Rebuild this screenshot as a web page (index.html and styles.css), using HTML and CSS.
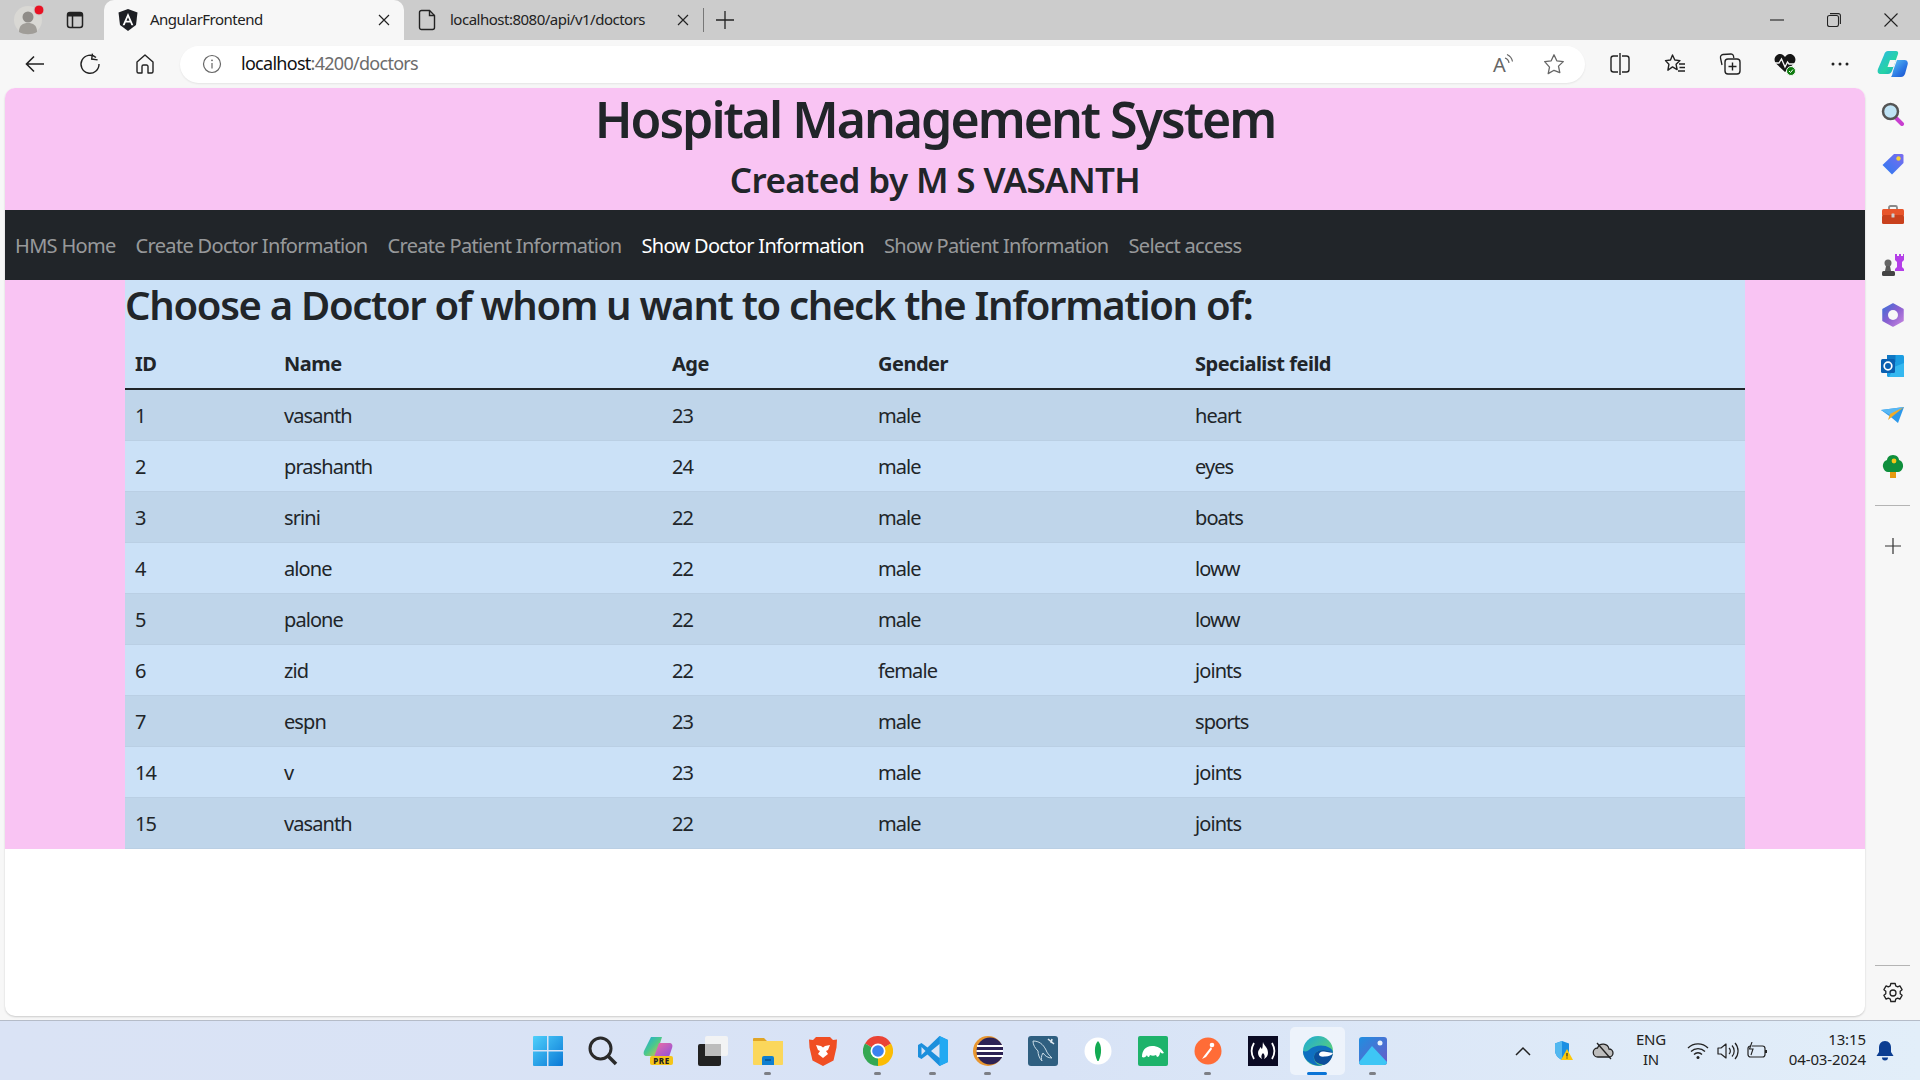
FILE: index.html
```html
<!DOCTYPE html>
<html lang="en">
<head>
<meta charset="utf-8">
<title>AngularFrontend</title>
<link rel="stylesheet" href="styles.css">
</head>
<body>
<div class="app">
  <div class="tabstrip">
    <div class="tab-side">
      <span class="profile"><svg width="32" height="32" viewBox="0 0 32 32"><circle cx="14" cy="16" r="14" fill="#d9d8d4"/><circle cx="14" cy="13" r="5.5" fill="#8f8c88"/><path d="M5 28c0-7 4-9 9-9s9 2 9 9c-5 3-13 3-18 0z" fill="#a09d98"/><circle cx="25" cy="6" r="5" fill="#e81123" stroke="#ccc" stroke-width="1"/></svg></span>
      <span class="tab-actions"><svg width="20" height="20" viewBox="0 0 20 20"><rect x="2.5" y="2.5" width="15" height="15" rx="2.5" fill="none" stroke="#222" stroke-width="1.5"/><path d="M3 3h14v3.5H3z" fill="#222"/><path d="M7.5 6v11" stroke="#222" stroke-width="1.5"/></svg></span>
    </div>
    <div class="tab tab-active">
      <svg width="20" height="22" viewBox="0 0 20 22"><path d="M10 0l9.5 3.4-1.5 12.6L10 22l-8-6L.5 3.4z" fill="#1d1f24"/><path d="M10 4L4.6 16.2h2l1.1-2.7h4.6l1.1 2.7h2zM8.5 11.8L10 8.2l1.5 3.6z" fill="#fff"/></svg>
      <span class="tab-title">AngularFrontend</span>
      <svg class="tab-close" width="12" height="12" viewBox="0 0 12 12"><path d="M1 1l10 10M11 1L1 11" stroke="#222" stroke-width="1.2"/></svg>
    </div>
    <div class="tab tab-second">
      <svg width="20" height="22" viewBox="0 0 20 22"><path d="M3.5 1.5h8l5 5v12a2 2 0 0 1-2 2h-11a2 2 0 0 1-2-2v-15a2 2 0 0 1 2-2z" fill="none" stroke="#222" stroke-width="1.4"/><path d="M11.5 1.5v5h5" fill="none" stroke="#222" stroke-width="1.4"/></svg>
      <span class="tab-title">localhost:8080/api/v1/doctors</span>
      <svg class="tab-close" width="12" height="12" viewBox="0 0 12 12"><path d="M1 1l10 10M11 1L1 11" stroke="#222" stroke-width="1.2"/></svg>
    </div>
    <span class="tab-sep"></span>
    <span class="new-tab"><svg width="18" height="18" viewBox="0 0 18 18"><path d="M9 0v18M0 9h18" stroke="#222" stroke-width="1.3"/></svg></span>
    <div class="win-controls">
      <span class="win-btn"><svg width="14" height="14" viewBox="0 0 14 14"><path d="M0 7h14" stroke="#222" stroke-width="1.1"/></svg></span>
      <span class="win-btn"><svg width="14" height="14" viewBox="0 0 14 14"><rect x=".5" y="2.5" width="11" height="11" rx="2" fill="none" stroke="#222" stroke-width="1.1"/><path d="M3 .6h8.4a2 2 0 0 1 2 2V11" fill="none" stroke="#222" stroke-width="1.1"/></svg></span>
      <span class="win-btn"><svg width="14" height="14" viewBox="0 0 14 14"><path d="M.5.5l13 13M13.5.5l-13 13" stroke="#222" stroke-width="1.1"/></svg></span>
    </div>
  </div>

  <div class="toolbar">
    <span class="tool"><svg width="22" height="22" viewBox="0 0 22 22"><path d="M20 11H3M10 3.5L2.5 11l7.5 7.5" fill="none" stroke="#222" stroke-width="1.6"/></svg></span>
    <span class="tool"><svg width="22" height="22" viewBox="0 0 22 22"><path d="M17 4.5A9 9 0 1 0 20 11" fill="none" stroke="#222" stroke-width="1.4"/><path d="M13 1v5.5h6" fill="none" stroke="#222" stroke-width="1.4" transform="rotate(8 16 4)"/></svg></span>
    <span class="tool"><svg width="22" height="22" viewBox="0 0 22 22"><path d="M11 2l8 7v9.5a1.5 1.5 0 0 1-1.5 1.5H14v-6.500a1.500 1.500 0 0 0-1.500-1.500h-3A1.500 1.500 0 0 0 8 13.500V20H4.500A1.500 1.500 0 0 1 3 18.500V9z" fill="none" stroke="#222" stroke-width="1.4" stroke-linejoin="round"/></svg></span>
    <div class="address">
      <svg width="20" height="20" viewBox="0 0 20 20"><circle cx="10" cy="10" r="8.500" fill="none" stroke="#666" stroke-width="1.200"/><path d="M10 9v5.500" stroke="#666" stroke-width="1.200"/><circle cx="10" cy="6.300" r=".9" fill="#666"/></svg>
      <span class="url"><span class="url-host">localhost</span>:4200/doctors</span>
      <span class="addr-end">
        <svg width="24" height="32" viewBox="0 0 24 32"><text x="1" y="24" class="read-a">A</text><path d="M13 10a6 6 0 0 1 4 5M15 6.500a9.500 9.500 0 0 1 5.500 7" fill="none" stroke="#666" stroke-width="1.200"/></svg>
        <svg width="22" height="22" viewBox="0 0 22 22"><path d="M11 1.800l2.800 6 6.500.8-4.800 4.500 1.300 6.500L11 17.300l-5.800 3.300 1.300-6.500L1.700 8.600l6.500-.8z" fill="none" stroke="#666" stroke-width="1.300" stroke-linejoin="round"/></svg>
      </span>
    </div>
    <div class="tool-right">
      <span class="tool"><svg width="22" height="22" viewBox="0 0 22 22"><path d="M9 3H4.500A2.500 2.500 0 0 0 2 5.500v11A2.500 2.500 0 0 0 4.500 19H9M13 3h4.500A2.500 2.500 0 0 1 20 5.500v11a2.500 2.500 0 0 1-2.500 2.500H13M11 0v22" fill="none" stroke="#222" stroke-width="1.400"/></svg></span>
      <span class="tool"><svg width="22" height="22" viewBox="0 0 22 22"><path d="M8.500 2l2.300 5 5.200.6-3.900 3.700 1 5.300-4.600-2.700-4.600 3.300 1-5.900L1.500 7.600l5-.6z" fill="none" stroke="#222" stroke-width="1.400" stroke-linejoin="round"/><path d="M15 11h6M15.500 14.500h5.500M14 18h7" stroke="#222" stroke-width="1.300"/></svg></span>
      <span class="tool"><svg width="22" height="22" viewBox="0 0 22 22"><path d="M3 12L1.500 5A3 3 0 0 1 4 1.500l8-.5a2.500 2.500 0 0 1 2.500 2l.3 2" fill="none" stroke="#222" stroke-width="1.300"/><rect x="6" y="6" width="15" height="15" rx="3" fill="#f7f7f7" stroke="#222" stroke-width="1.400"/><path d="M13.500 9.500v8M9.500 13.500h8" stroke="#222" stroke-width="1.400"/></svg></span>
      <span class="tool"><svg width="24" height="24" viewBox="0 0 24 24"><path d="M12 20L3 11.500C-.500 7 3 2 7 2c2.500 0 4 1.500 5 3 1-1.500 2.500-3 5-3 4 0 7.500 5 4 9.500z" fill="#161616"/><path d="M0 11h6l2.500-4 3.500 8 2.500-5 1.500 2h8" fill="none" stroke="#f7f7f7" stroke-width="1.300"/><circle cx="18" cy="19" r="4.500" fill="#107c10" stroke="#f7f7f7"/><path d="M16 19l1.500 1.500 2.500-3" fill="none" stroke="#fff" stroke-width="1"/></svg></span>
      <span class="tool"><svg width="20" height="6" viewBox="0 0 20 6"><circle cx="3" cy="3" r="1.500" fill="#222"/><circle cx="10" cy="3" r="1.500" fill="#222"/><circle cx="17" cy="3" r="1.500" fill="#222"/></svg></span>
      <span class="tool tool-last"><svg width="31" height="28" viewBox="0 0 31 28"><defs><linearGradient id="cpa" x1="0" y1="0" x2="1" y2="1"><stop offset="0" stop-color="#2fb6e8"/><stop offset=".6" stop-color="#25d3a5"/><stop offset="1" stop-color="#15a0c8"/></linearGradient><linearGradient id="cpb" x1="0" y1="0" x2="1" y2="1"><stop offset="0" stop-color="#5cc8f5"/><stop offset=".6" stop-color="#2c78e4"/><stop offset="1" stop-color="#1b4fc8"/></linearGradient></defs><path d="M11 1h8c2 0 2.500 1.500 2 3l-6 17c-1 2-2 3-4 3H4c-3 0-4-2-3-5L7 5c1-3 2-4 4-4z" fill="url(#cpa)"/><path d="M14 27h10c2 0 3-1 4-3l2.500-9c1-3-.5-5-3-5H20l-4 11c-.5 3-1 5-2 6z" fill="url(#cpb)"/><path d="M13 10h6l-2.500 7h-6z" fill="#f7f7f7"/></svg></span>
    </div>
  </div>

  <div class="middle">
    <main class="page">
      <header class="site-head">
        <h1 class="site-title">Hospital Management System</h1>
        <h3 class="site-sub">Created by M S VASANTH</h3>
      </header>
      <nav class="navbar">
        <a class="nav-link">HMS Home</a>
        <a class="nav-link">Create Doctor Information</a>
        <a class="nav-link">Create Patient Information</a>
        <a class="nav-link is-active">Show Doctor Information</a>
        <a class="nav-link">Show Patient Information</a>
        <a class="nav-link">Select access</a>
      </nav>
      <section class="content">
        <div class="container">
          <h2 class="choose">Choose a Doctor of whom u want to check the Information of:</h2>
          <table class="doctors">
            <colgroup><col class="c-id"><col class="c-name"><col class="c-age"><col class="c-gender"><col class="c-spec"></colgroup>
            <thead><tr><th>ID</th><th>Name</th><th>Age</th><th>Gender</th><th>Specialist feild</th></tr></thead>
            <tbody>
              <tr><td>1</td><td>vasanth</td><td>23</td><td>male</td><td>heart</td></tr>
              <tr><td>2</td><td>prashanth</td><td>24</td><td>male</td><td>eyes</td></tr>
              <tr><td>3</td><td>srini</td><td>22</td><td>male</td><td>boats</td></tr>
              <tr><td>4</td><td>alone</td><td>22</td><td>male</td><td>loww</td></tr>
              <tr><td>5</td><td>palone</td><td>22</td><td>male</td><td>loww</td></tr>
              <tr><td>6</td><td>zid</td><td>22</td><td>female</td><td>joints</td></tr>
              <tr><td>7</td><td>espn</td><td>23</td><td>male</td><td>sports</td></tr>
              <tr><td>14</td><td>v</td><td>23</td><td>male</td><td>joints</td></tr>
              <tr><td>15</td><td>vasanth</td><td>22</td><td>male</td><td>joints</td></tr>
            </tbody>
          </table>
        </div>
      </section>
    </main>
    <aside class="sidebar">
      <span class="side-item"><svg width="24" height="24" viewBox="0 0 24 24"><path d="M14 15l7 7" stroke="#c83fd0" stroke-width="4" stroke-linecap="round"/><circle cx="9.500" cy="9.500" r="7.500" fill="#bfe3f5" stroke="#555" stroke-width="2.500"/></svg></span>
      <span class="side-item"><svg width="24" height="24" viewBox="0 0 24 24"><defs><linearGradient id="tag" x1="0" y1="1" x2="1" y2="0"><stop offset="0" stop-color="#2a7bf0"/><stop offset="1" stop-color="#7b6cf0"/></linearGradient></defs><path d="M13 2h8a1.500 1.500 0 0 1 1.500 1.500V11L11 22.500 1.500 13z" fill="url(#tag)"/><circle cx="17.500" cy="6.500" r="2.200" fill="#f7d038"/></svg></span>
      <span class="side-item"><svg width="24" height="24" viewBox="0 0 24 24"><path d="M8 7V4.500A1.500 1.500 0 0 1 9.500 3h5A1.500 1.500 0 0 1 16 4.500V7" fill="none" stroke="#888" stroke-width="1.800"/><rect x="1" y="6" width="22" height="7" rx="1.500" fill="#e8552b"/><rect x="1" y="12" width="22" height="9" rx="1.500" fill="#c9411d"/><rect x="10.500" y="10.500" width="3" height="4" rx=".6" fill="#cfcfcf"/></svg></span>
      <span class="side-item"><svg width="24" height="24" viewBox="0 0 24 24"><path d="M14 1h2v2h2V1h2v2h2V1h1v6l-2 2v5l2 2v2H14v-2l2-2V9l-2-2z" fill="#b43fe8"/><circle cx="7" cy="10" r="3.500" fill="#666"/><path d="M5 13h4l1 5H4z" fill="#5a5a5a"/><rect x="1" y="18" width="13" height="5" rx="1.500" fill="#444"/></svg></span>
      <span class="side-item"><svg width="24" height="24" viewBox="0 0 24 24"><defs><linearGradient id="m365" x1="0" y1="0" x2="1" y2="1"><stop offset="0" stop-color="#3b6fd8"/><stop offset=".5" stop-color="#8a5fd0"/><stop offset="1" stop-color="#c887e0"/></linearGradient></defs><path d="M12 1l10 5.500v11L12 23 2 17.500v-11z" fill="url(#m365)" stroke="url(#m365)" stroke-width="1.500" stroke-linejoin="round"/><circle cx="12" cy="12" r="5" fill="#f7f7f7"/></svg></span>
      <span class="side-item"><svg width="24" height="24" viewBox="0 0 24 24"><rect x="6" y="1" width="17" height="22" rx="1.500" fill="#1b9de2"/><path d="M6 1h8.500v7H6z" fill="#0f78c4"/><path d="M13 13l10-4v14H8z" fill="#35b8f0"/><rect x="0" y="5" width="14" height="14" rx="1.500" fill="#0a5fb0"/><circle cx="7" cy="12" r="3.800" fill="none" stroke="#fff" stroke-width="1.700"/></svg></span>
      <span class="side-item"><svg width="24" height="24" viewBox="0 0 24 24"><path d="M0 6l23-3-6 16-6-5z" fill="#2c98ea"/><path d="M0 6l23-3L9 11z" fill="#58b7f3"/><path d="M23 3L9 10l-2 6z" fill="#f0ab28"/></svg></span>
      <span class="side-item"><svg width="24" height="24" viewBox="0 0 24 24"><rect x="9" y="16" width="6" height="8" fill="#e79a10"/><path d="M12 1c4 0 6 3 6 5 3 1 4.500 4 4 7-.5 3-3 5-5 5H7c-2 0-4.500-2-5-5-.5-3 1-6 4-7 0-2 2-5 6-5z" fill="#0f8f3c"/><circle cx="13" cy="7" r="2.400" fill="#f5c518"/></svg></span>
      <span class="side-rule"></span>
      <span class="side-item"><svg width="16" height="16" viewBox="0 0 16 16"><path d="M8 0v16M0 8h16" stroke="#333" stroke-width="1.200"/></svg></span>
      <span class="side-spacer"></span>
      <span class="side-rule side-rule-end"></span>
      <span class="side-item"><svg width="22" height="22" viewBox="0 0 22 22"><path d="M8.800 1.500h4.400l.5 2.400 2 1 2.200-1 2.200 3.800-1.900 1.600v2.400l1.900 1.600-2.200 3.800-2.200-1-2 1-.5 2.400H8.800l-.5-2.400-2-1-2.200 1-2.200-3.800 1.900-1.600V9.300L1.900 7.700l2.200-3.800 2.200 1 2-1z" fill="none" stroke="#222" stroke-width="1.300" stroke-linejoin="round"/><circle cx="11" cy="11" r="3" fill="none" stroke="#222" stroke-width="1.300"/></svg></span>
    </aside>
  </div>

  <footer class="taskbar">
    <div class="tb-left"></div>
    <div class="tb-apps">
      <span class="app-icon"><svg width="30" height="30" viewBox="0 0 30 30"><defs><linearGradient id="win" x1="0" y1="0" x2="1" y2="1"><stop offset="0" stop-color="#4fd0fb"/><stop offset="1" stop-color="#0a78d6"/></linearGradient></defs><path d="M1 0h13v14H0V1a1 1 0 0 1 1-1zM15.500 0H29a1 1 0 0 1 1 1v13H15.500zM0 15.500h14V30H1a1 1 0 0 1-1-1zM15.500 15.500H30V29a1 1 0 0 1-1 1H15.500z" fill="url(#win)"/></svg></span>
      <span class="app-icon"><svg width="30" height="30" viewBox="0 0 30 30"><circle cx="12.500" cy="12.500" r="10.500" fill="none" stroke="#2a2a2a" stroke-width="3"/><path d="M20 20l8 8" stroke="#2a2a2a" stroke-width="3.500"/></svg></span>
      <span class="app-icon"><svg class="svg-tall" width="30" height="36" viewBox="0 -3 30 36"><defs><linearGradient id="cp1" x1="0" y1="0" x2="1" y2="1"><stop offset="0" stop-color="#1ba8e0"/><stop offset=".5" stop-color="#4cc98a"/><stop offset="1" stop-color="#e8c43a"/></linearGradient><linearGradient id="cp2" x1="0" y1="0" x2="1" y2="1"><stop offset="0" stop-color="#f06fa0"/><stop offset="1" stop-color="#8a4fe0"/></linearGradient></defs><path d="M8 1h11l-6 19H4c-3 0-4-2-3-5z" fill="url(#cp1)"/><path d="M16 7h10c3 0 4 2 3 5l-3 9H11z" fill="url(#cp2)"/><rect x="7" y="20" width="23" height="9" rx="2" fill="#f5c518"/><text x="18.500" y="27.500" class="pre">PRE</text></svg></span>
      <span class="app-icon"><svg width="30" height="30" viewBox="0 0 30 30"><rect x="0" y="8" width="23" height="22" rx="2" fill="#222"/><rect x="7" y="0" width="23" height="20" rx="2" fill="#f3f3f3" opacity=".95"/><rect x="7" y="8" width="16" height="12" fill="#bdbdbd"/></svg></span>
      <span class="app-icon has-dot"><svg width="30" height="30" viewBox="0 0 30 30"><path d="M0 3a1 1 0 0 1 1-1h10l3 3h16v4H0z" fill="#e0a526"/><path d="M0 5h30v23a1 1 0 0 1-1 1H1a1 1 0 0 1-1-1z" fill="#fbd75b"/><path d="M9 22a2 2 0 0 1 2-2h8a2 2 0 0 1 2 2v7H9z" fill="#0f7fd0"/><path d="M12 24h6" stroke="#084e88" stroke-width="1.400"/></svg></span>
      <span class="app-icon"><svg width="30" height="30" viewBox="0 0 30 30"><path d="M8 1h14l3 3 4-.500-.5 8-3 13L15 30 4.500 24.500l-3-13-.5-8 4 .5z" fill="#f04e23"/><path d="M8 9l5 1 2 1.500 2-1.500 5-1-2 5-2 1 2 3-5 4-5-4 2-3-2-1z" fill="#fff"/></svg></span>
      <span class="app-icon has-dot"><svg width="30" height="30" viewBox="0 0 30 30"><path d="M15 15L2 7.500A15 15 0 0 1 28 7.500z" fill="#ea4335"/><path d="M15 15l-13-7.500A15 15 0 0 0 15 30z" fill="#34a853"/><path d="M15 15l13-7.500A15 15 0 0 1 15 30z" fill="#fbbc05"/><circle cx="15" cy="15" r="7.500" fill="#fff"/><circle cx="15" cy="15" r="5.800" fill="#3b82f0"/></svg></span>
      <span class="app-icon has-dot"><svg width="30" height="30" viewBox="0 0 30 30"><path d="M21.500 0L30 4v22l-8.500 4L9.500 18.500 3.500 23 0 21V9l3.500-2 6 4.500z" fill="#1c8fdc"/><path d="M21.500 0L30 4v22l-8.500 4z" fill="#23a9f2"/><path d="M21.500 8L13 15l8.500 7zM3.500 11v8l4-4z" fill="#dbe5f6"/></svg></span>
      <span class="app-icon has-dot"><svg width="30" height="30" viewBox="0 0 30 30"><circle cx="15" cy="15" r="15" fill="#e8962f"/><circle cx="17" cy="15" r="13.500" fill="#2c2255"/><path d="M4 10h26M3.500 15h27M4 20h26" stroke="#fff" stroke-width="2.200"/></svg></span>
      <span class="app-icon"><svg width="30" height="30" viewBox="0 0 30 30"><rect width="30" height="30" rx="3" fill="#2f5f80"/><path d="M5 5c6 0 10 3 13 9 1 3 3 5 6 8-4 0-7-2-9-5-2 3-2 6-1 8-3-3-4-7-4-10-3-3-5-6-5-10z" fill="none" stroke="#c9dbe6" stroke-width="1"/><path d="M20 3l6 5M24 3l-1 4" stroke="#dfe9f0" stroke-width="1.600"/></svg></span>
      <span class="app-icon"><svg width="30" height="30" viewBox="0 0 30 30"><circle cx="15" cy="15" r="13.500" fill="#fff"/><path d="M15 5c4 4 4 13 .6 20h-1.200C11 18 11 9 15 5z" fill="#13aa52"/></svg></span>
      <span class="app-icon"><svg width="30" height="30" viewBox="0 0 30 30"><rect width="30" height="30" rx="2" fill="#1eb36b"/><path d="M4 21c0-6 3-11 10-11 6 0 9 2 12 7-2 1-3 0-4-1 0 2-1 5-3 5l-1-2c-2 1-4 1-6 0l-1 2c-2 0-2-2-2-2-1 2-3 3-5 2z" fill="#fff"/></svg></span>
      <span class="app-icon has-dot"><svg width="30" height="30" viewBox="0 0 30 30"><circle cx="15" cy="15" r="13.500" fill="#ff6c37"/><circle cx="19" cy="9" r="2.300" fill="#fff"/><path d="M18 11l-7 9-2 3 4-2 6-8z" fill="#fff"/></svg></span>
      <span class="app-icon"><svg width="30" height="30" viewBox="0 0 30 30"><rect width="30" height="30" fill="#0a0a23"/><path d="M6 7c-3 5-3 11 0 16M24 7c3 5 3 11 0 16" fill="none" stroke="#fff" stroke-width="1.800"/><path d="M15 6c1 4 5 5 5 11 0 3-2 5-4 6 1-2 1-4-1-6-2 2-2 4-1 6-2-1-4-3-4-6 0-3 2-4 2.500-6 1 1 1 2 1.500 2 1-2 .5-5 1-7z" fill="#fff"/></svg></span>
      <span class="app-icon is-current"><svg width="30" height="30" viewBox="0 0 30 30"><defs><linearGradient id="edg" x1="0" y1="0" x2="1" y2="1"><stop offset="0" stop-color="#1ba9d8"/><stop offset="1" stop-color="#6fdc5c"/></linearGradient></defs><circle cx="15" cy="15" r="15" fill="url(#edg)"/><path d="M30 17c-2-2-6-3-10-3-6 0-10 4-9 9 1 4 5 7 10 6-4 1-8 1-12-1C3 25 0 20 0 15c3 1 5 0 7-2 5-4 14-5 20-1 2 1 3 3 3 5z" fill="#0f6fc0"/><path d="M11 21c0-4 4-7 9-7 4 0 8 1 10 3-1 6-4 10-9 12-6-1-10-3-10-8z" fill="#0c4f9c"/><path d="M16 18.500c0-2 2-3.500 5-3 3 .5 6 1 9 1.500-1 2-4 3.500-8 3.500-4 .5-6-.5-6-2z" fill="#fff"/></svg><span class="current-bar"></span></span>
      <span class="app-icon has-dot"><svg width="28" height="28" viewBox="0 0 28 28"><defs><linearGradient id="ph" x1="0" y1="0" x2="1" y2="1"><stop offset="0" stop-color="#1f8fe0"/><stop offset="1" stop-color="#6c5ac8"/></linearGradient></defs><rect width="28" height="28" rx="3" fill="url(#ph)"/><circle cx="21" cy="6" r="2.500" fill="#e9f2fb"/><path d="M0 25L13 9l15 16v0a3 3 0 0 1-3 3H3a3 3 0 0 1-3-3z" fill="#3ec6f5"/></svg></span>
    </div>
    <div class="tray">
      <span class="tray-item"><svg width="16" height="10" viewBox="0 0 16 10"><path d="M1 9l7-7 7 7" fill="none" stroke="#222" stroke-width="1.500"/></svg></span>
      <span class="tray-item"><svg width="20" height="20" viewBox="0 0 20 20"><path d="M9 0l7 2.500V9c0 5-3 8-7 10-4-2-7-5-7-10V2.500z" fill="#1a8fe3"/><path d="M9 0v19C5 17 2 14 2 9V2.500z" fill="#52b8f0"/><path d="M14 8l6 11H8z" fill="#fdc90a"/><path d="M14 12v3.500M14 16.500v1" stroke="#222" stroke-width="1.100"/></svg></span>
      <span class="tray-item"><svg width="22" height="20" viewBox="0 0 22 20"><path d="M6 16a4.500 4.500 0 0 1-.5-9A6 6 0 0 1 17 8a4 4 0 0 1 0 8z" fill="#bdbdbd" stroke="#222" stroke-width="1.300"/><path d="M5 2l14 16" stroke="#222" stroke-width="1.300"/></svg></span>
      <span class="tray-lang"><span>ENG</span><span>IN</span></span>
      <span class="tray-sys"><svg width="22" height="18" viewBox="0 0 22 18"><path d="M1 6a14 14 0 0 1 20 0M4 9.500a10 10 0 0 1 14 0M7 12.500a5.500 5.500 0 0 1 8 0" fill="none" stroke="#222" stroke-width="1.300"/><circle cx="11" cy="15.500" r="1.500" fill="#222"/></svg></span>
      <span class="tray-sys"><svg width="22" height="18" viewBox="0 0 22 18"><path d="M1 6h3l5-4v14l-5-4H1z" fill="none" stroke="#222" stroke-width="1.200" stroke-linejoin="round"/><path d="M12 6a4 4 0 0 1 0 6M15 3.500a8 8 0 0 1 0 11M18 1a12 12 0 0 1 0 16" fill="none" stroke="#222" stroke-width="1.200"/></svg></span>
      <span class="tray-sys"><svg width="22" height="18" viewBox="0 0 22 18"><rect x="1" y="4" width="17" height="11" rx="2.500" fill="none" stroke="#222" stroke-width="1.200"/><path d="M19 8v3" stroke="#222" stroke-width="2"/><path d="M5 0L2.500 7H6l-2 6" fill="#e0ecf8" stroke="#222" stroke-width="1.100"/></svg></span>
      <span class="clock"><span>13:15</span><span>04-03-2024</span></span>
      <span class="bell"><svg width="18" height="20" viewBox="0 0 18 20"><path d="M9 0c4 0 6 3 6 6.500V11l2.500 4H.5L3 11V6.500C3 3 5 0 9 0z" fill="#0b3d91"/><path d="M6 16.500h6a3 3 0 0 1-6 0z" fill="#0b3d91"/></svg></span>
    </div>
  </footer>
</div>
</body>
</html>
```
FILE: styles.css
```css
* { box-sizing: border-box; }
html, body { margin: 0; padding: 0; }
body { font-family: "Noto Sans", "Open Sans", sans-serif; color: #212529; background: #f7f7f7; overflow: hidden; }
svg { display: block; flex: none; }
.app { display: flex; flex-direction: column; width: 1920px; height: 1080px; }

/* tab strip */
.tabstrip { display: flex; align-items: stretch; height: 40px; background: #cccccc; }
.tab-side { display: flex; align-items: center; width: 104px; padding-left: 14px; }
.profile { width: 32px; margin-right: 19px; }
.tab { display: flex; align-items: center; width: 300px; padding: 0 14px; gap: 12px; font-size: 15px; letter-spacing: -0.5px; color: #222; }
.tab-second { width: 299px; }
.tab-active { background: #f7f7f7; border-radius: 10px 10px 0 0; }
.tab-title { flex: 1; white-space: nowrap; padding-bottom: 2px; }
.tab-sep { width: 1px; height: 24px; align-self: center; background: #777; }
.new-tab { display: flex; align-items: center; margin-left: 12px; }
.win-controls { display: flex; align-items: center; margin-left: auto; padding-right: 1px; }
.win-btn { width: 57px; display: flex; justify-content: center; }

/* toolbar */
.toolbar { display: flex; align-items: center; height: 48px; background: #f7f7f7; padding-left: 7px; }
.tool { width: 55px; height: 36px; display: flex; align-items: center; justify-content: center; flex: none; }
.tool-last { width: 50px; }
.address { display: flex; align-items: center; flex: none; width: 1405px; height: 37px; margin-left: 8px; margin-right: 7px; padding: 0 20px 0 22px; background: #fff; border-radius: 19px; box-shadow: 0 1px 2px rgba(0,0,0,.08); }
.url { margin-left: 19px; padding-bottom: 2px; font-size: 18px; letter-spacing: -0.72px; color: #6c6c6c; white-space: nowrap; }
.url-host { color: #111; }
.addr-end { display: flex; align-items: center; gap: 27px; margin-left: auto; height: 32px; }
.read-a { font: 20px "Noto Sans", sans-serif; fill: #666; }
.tool-right { display: flex; }

/* middle */
.middle { display: flex; height: 932px; }
.page { width: 1860px; height: 928px; margin-left: 5px; background: #fff; border-radius: 10px; box-shadow: 0 1px 2px rgba(0,0,0,.18); }
.site-head { background: #f9c4f3; text-align: center; height: 122px; padding-top: 1px; border-radius: 10px 10px 0 0; }
.site-title { margin: 0 0 10px; font-size: 50px; font-weight: 600; line-height: 60px; letter-spacing: -2px; white-space: nowrap; }
.site-sub { margin: 0; font-size: 35px; font-weight: 600; line-height: 42px; letter-spacing: -0.62px; white-space: nowrap; }
.navbar { display: flex; align-items: center; height: 70px; padding-top: 1px; background: #212529; font-size: 20px; }
.nav-link { padding: 0 10px; color: rgba(255,255,255,.55); letter-spacing: -0.68px; white-space: nowrap; }
.is-active { color: #fff; }
.content { background: #f9c4f3; }
.container { width: 1620px; margin: 0 auto; background: #cbe1f7; }
.choose { margin: 0; padding-top: 1px; height: 58px; font-size: 40px; font-weight: 600; line-height: 48px; letter-spacing: -1.31px; white-space: nowrap; }
.doctors { width: 100%; border-collapse: collapse; table-layout: fixed; font-size: 20px; }
.c-id { width: 149px; } .c-name { width: 388px; } .c-age { width: 206px; } .c-gender { width: 317px; }
.doctors th, .doctors td { height: 51px; padding: 0 10px; text-align: left; }
.doctors th { font-weight: 700; letter-spacing: -0.5px; border-bottom: 2px solid #212529; }
.doctors td { padding-top: 2px; border-bottom: 1px solid #bacfe4; font-weight: 400; letter-spacing: -0.92px; }
.doctors tbody tr:nth-child(odd) td { background: #bfd5ea; }

/* sidebar */
.sidebar { flex: 1; display: flex; flex-direction: column; align-items: center; padding: 1px 0 2px; }
.side-item { height: 50.3px; width: 100%; display: flex; align-items: center; justify-content: center; flex: none; }
.side-rule { width: 35px; height: 1px; flex: none; background: #b4b4b4; margin: 14px 0 14px; }
.side-rule-end { margin-bottom: 2px; }
.side-spacer { flex: 1; }

/* taskbar */
.taskbar { display: grid; grid-template-columns: 1fr auto 1fr; height: 60px; border-top: 1px solid #b5bcc8; background: linear-gradient(90deg, #dae3f5 0%, #d8e3f6 55%, #e2eef9 100%); }
.tb-apps { display: flex; align-items: center; }
.app-icon { position: relative; width: 55px; height: 48px; display: flex; align-items: center; justify-content: center; }
.has-dot::after { content: ""; position: absolute; left: 24px; bottom: 0; width: 7px; height: 3px; border-radius: 2px; background: #7d7f85; }
.is-current { background: rgba(255,255,255,.5); border-radius: 5px; }
.current-bar { position: absolute; left: 17px; bottom: 0; width: 20px; height: 3px; border-radius: 2px; background: #0a74d6; }
.pre { font: 800 8px "Noto Sans", sans-serif; fill: #222; text-anchor: middle; letter-spacing: .5px; }
.tray { display: flex; align-items: center; justify-content: flex-end; }
.tray-item { width: 40px; display: flex; justify-content: center; }
.tray-lang { display: flex; flex-direction: column; align-items: center; width: 56px; margin-right: 4px; padding-bottom: 3px; font-size: 15px; line-height: 20px; letter-spacing: -0.2px; color: #222; }
.tray-sys { width: 30px; display: flex; justify-content: center; }
.clock { display: flex; flex-direction: column; align-items: flex-end; width: 93px; padding-bottom: 4px; font-size: 15px; line-height: 20px; color: #222; letter-spacing: -0.1px; }
.bell { width: 54px; padding: 0 0 0 10px; }
```
